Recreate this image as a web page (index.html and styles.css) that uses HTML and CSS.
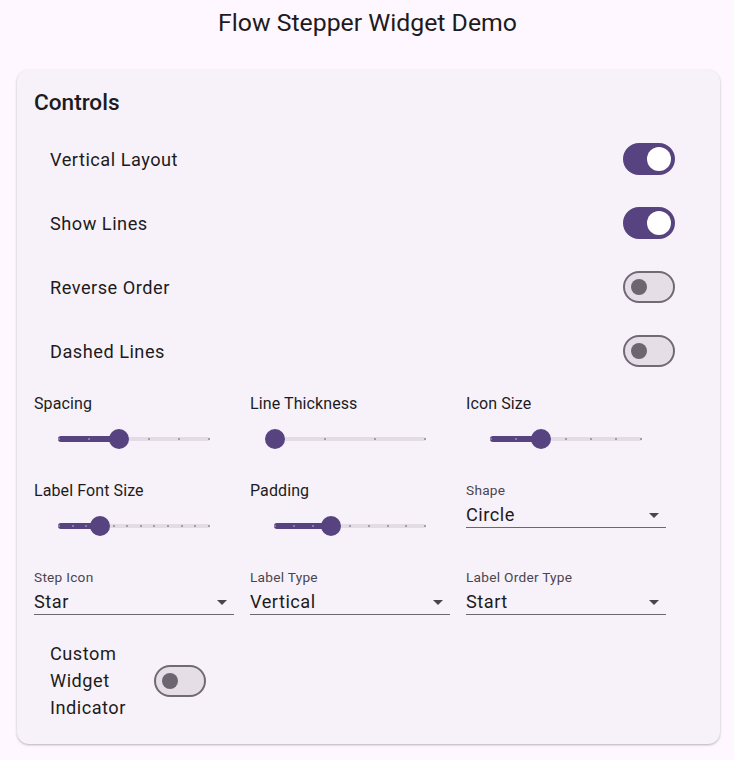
FILE: index.html
```html
<!DOCTYPE html>
<html lang="en">
<head>
<meta charset="utf-8">
<title>Flow Stepper Widget Demo</title>
<link rel="stylesheet" href="styles.css">
</head>
<body>
<header class="appbar"><h1 class="appbar-title">Flow Stepper Widget Demo</h1></header>
<main class="page">
  <section class="card">
    <h2 class="card-title">Controls</h2>
    <div class="tile"><span class="tile-label">Vertical Layout</span><span class="switch on"><span class="knob"></span></span></div>
    <div class="tile"><span class="tile-label">Show Lines</span><span class="switch on"><span class="knob"></span></span></div>
    <div class="tile"><span class="tile-label">Reverse Order</span><span class="switch"><span class="knob"></span></span></div>
    <div class="tile"><span class="tile-label">Dashed Lines</span><span class="switch"><span class="knob"></span></span></div>

    <div class="wrap">
      <div class="item">
        <div class="slider-label">Spacing</div>
        <div class="slider">
          <span class="track-inactive"></span>
          <span class="track-active" style="width: 61px"></span>
          <span class="ticks"><i class="a"></i><i class="a"></i><i class="a"></i><i></i><i></i><i></i></span>
          <span class="thumb" style="left: 75px"></span>
        </div>
      </div>
      <div class="item">
        <div class="slider-label">Line Thickness</div>
        <div class="slider">
          <span class="track-inactive"></span>
          <span class="ticks"><i></i><i></i><i></i><i></i></span>
          <span class="thumb" style="left: 15px"></span>
        </div>
      </div>
      <div class="item">
        <div class="slider-label">Icon Size</div>
        <div class="slider">
          <span class="track-inactive"></span>
          <span class="track-active" style="width: 51px"></span>
          <span class="ticks"><i class="a"></i><i class="a"></i><i class="a"></i><i></i><i></i><i></i><i></i></span>
          <span class="thumb" style="left: 65px"></span>
        </div>
      </div>

      <div class="item">
        <div class="slider-label">Label Font Size</div>
        <div class="slider">
          <span class="track-inactive"></span>
          <span class="track-active" style="width: 42px"></span>
          <span class="ticks"><i class="a"></i><i class="a"></i><i class="a"></i><i class="a"></i><i></i><i></i><i></i><i></i><i></i><i></i><i></i><i></i></span>
          <span class="thumb" style="left: 56px"></span>
        </div>
      </div>
      <div class="item">
        <div class="slider-label">Padding</div>
        <div class="slider">
          <span class="track-inactive"></span>
          <span class="track-active" style="width: 57px"></span>
          <span class="ticks"><i class="a"></i><i class="a"></i><i class="a"></i><i class="a"></i><i></i><i></i><i></i><i></i><i></i></span>
          <span class="thumb" style="left: 71px"></span>
        </div>
      </div>
      <div class="item">
        <div class="dropdown">
          <div class="dd-label">Shape</div>
          <div class="dd-field"><span class="dd-value">Circle</span>
            <svg class="dd-arrow" viewBox="0 0 24 24" width="24" height="24"><path d="M7 10l5 5 5-5z"/></svg></div>
        </div>
      </div>

      <div class="item">
        <div class="dropdown">
          <div class="dd-label">Step Icon</div>
          <div class="dd-field"><span class="dd-value">Star</span>
            <svg class="dd-arrow" viewBox="0 0 24 24" width="24" height="24"><path d="M7 10l5 5 5-5z"/></svg></div>
        </div>
      </div>
      <div class="item">
        <div class="dropdown">
          <div class="dd-label">Label Type</div>
          <div class="dd-field"><span class="dd-value">Vertical</span>
            <svg class="dd-arrow" viewBox="0 0 24 24" width="24" height="24"><path d="M7 10l5 5 5-5z"/></svg></div>
        </div>
      </div>
      <div class="item">
        <div class="dropdown">
          <div class="dd-label">Label Order Type</div>
          <div class="dd-field"><span class="dd-value">Start</span>
            <svg class="dd-arrow" viewBox="0 0 24 24" width="24" height="24"><path d="M7 10l5 5 5-5z"/></svg></div>
        </div>
      </div>

      <div class="item">
        <div class="tile tile-small"><span class="tile-label">Custom Widget Indicator</span><span class="switch"><span class="knob"></span></span></div>
      </div>
    </div>
  </section>
</main>
</body>
</html>
```

FILE: styles.css
```css
* { box-sizing: border-box; }
html, body { margin: 0; padding: 0; }
body {
  background: #FEF7FF;
  font-family: Roboto, "Liberation Sans", sans-serif;
  color: #1D1B20;
  width: 734px;
  min-height: 760px;
}
.appbar {
  height: 46px;
  display: flex;
  align-items: center;
  justify-content: center;
}
.appbar-title {
  margin: 0;
  font-size: 24.8px;
  font-weight: 400;
  line-height: 32px;
  padding-left: 1px;
}
.page {
  padding: 24px 14px 16px 17px;
}
.card {
  background: #F7F2FA;
  border-radius: 12px;
  box-shadow: 0 1px 2px rgba(0,0,0,0.22), 0 1px 3px 1px rgba(0,0,0,0.05);
  padding: 17px 16px 15px 17px;
}
.card-title {
  margin: 0 0 8px 0;
  font-size: 22.6px;
  font-weight: 500;
  line-height: 32px;
}
.tile {
  height: 64px;
  display: flex;
  align-items: center;
  justify-content: space-between;
  padding: 0 25px 0 16px;
}
.tile-label {
  font-size: 18.2px;
  letter-spacing: 0.5px;
  line-height: 27px;
}
.switch {
  position: relative;
  width: 52px;
  height: 32px;
  margin: 0 4px;
  border-radius: 16px;
  background: #E5DEE7;
  border: 2px solid #706A75;
  flex: none;
}
.switch .knob {
  position: absolute;
  width: 16px;
  height: 16px;
  border-radius: 50%;
  background: #6C6671;
  left: 6px;
  top: 6px;
}
.switch.on {
  background: #56437F;
  border-color: #56437F;
}
.switch.on .knob {
  width: 24px;
  height: 24px;
  background: #FFFFFF;
  left: 22px;
  top: 2px;
}
.wrap {
  margin-top: 9px;
  display: flex;
  flex-wrap: wrap;
  column-gap: 16px;
  row-gap: 16px;
  align-items: flex-start;
}
.item {
  width: 200px;
}
.slider-label {
  font-size: 16px;
  letter-spacing: 0.1px;
  line-height: 23px;
}
.slider {
  position: relative;
  height: 48px;
}
.track-inactive {
  position: absolute;
  left: 24px;
  width: 152px;
  top: 22px;
  height: 4px;
  border-radius: 2px;
  background: #E3DBE5;
}
.track-active {
  position: absolute;
  left: 24px;
  top: 21px;
  height: 6px;
  border-radius: 3px 0 0 3px;
  background: #56437F;
}
.ticks {
  position: absolute;
  left: 24px;
  width: 152px;
  top: 23px;
  height: 2px;
  display: flex;
  justify-content: space-between;
}
.ticks i {
  width: 2px;
  height: 2px;
  border-radius: 50%;
  background: #8F8896;
}
.ticks i.a {
  background: #9C8FB8;
}
.thumb {
  position: absolute;
  top: 14px;
  width: 20px;
  height: 20px;
  border-radius: 50%;
  background: #56437F;
}
.dropdown {
  height: 50px;
}
.dd-label {
  font-size: 13.7px;
  letter-spacing: 0.25px;
  line-height: 23px;
  color: #49454F;
}
.dd-field {
  height: 26px;
  display: flex;
  align-items: center;
  justify-content: space-between;
  border-bottom: 1px solid #6B6670;
}
.dd-value {
  font-size: 18.2px;
  letter-spacing: 0.5px;
  line-height: 25px;
}
.dd-arrow {
  fill: #49454F;
  flex: none;
}
.tile-small {
  height: auto;
  padding: 8px 24px 8px 16px;
}
.tile-small .tile-label {
  width: 84px;
}
```
